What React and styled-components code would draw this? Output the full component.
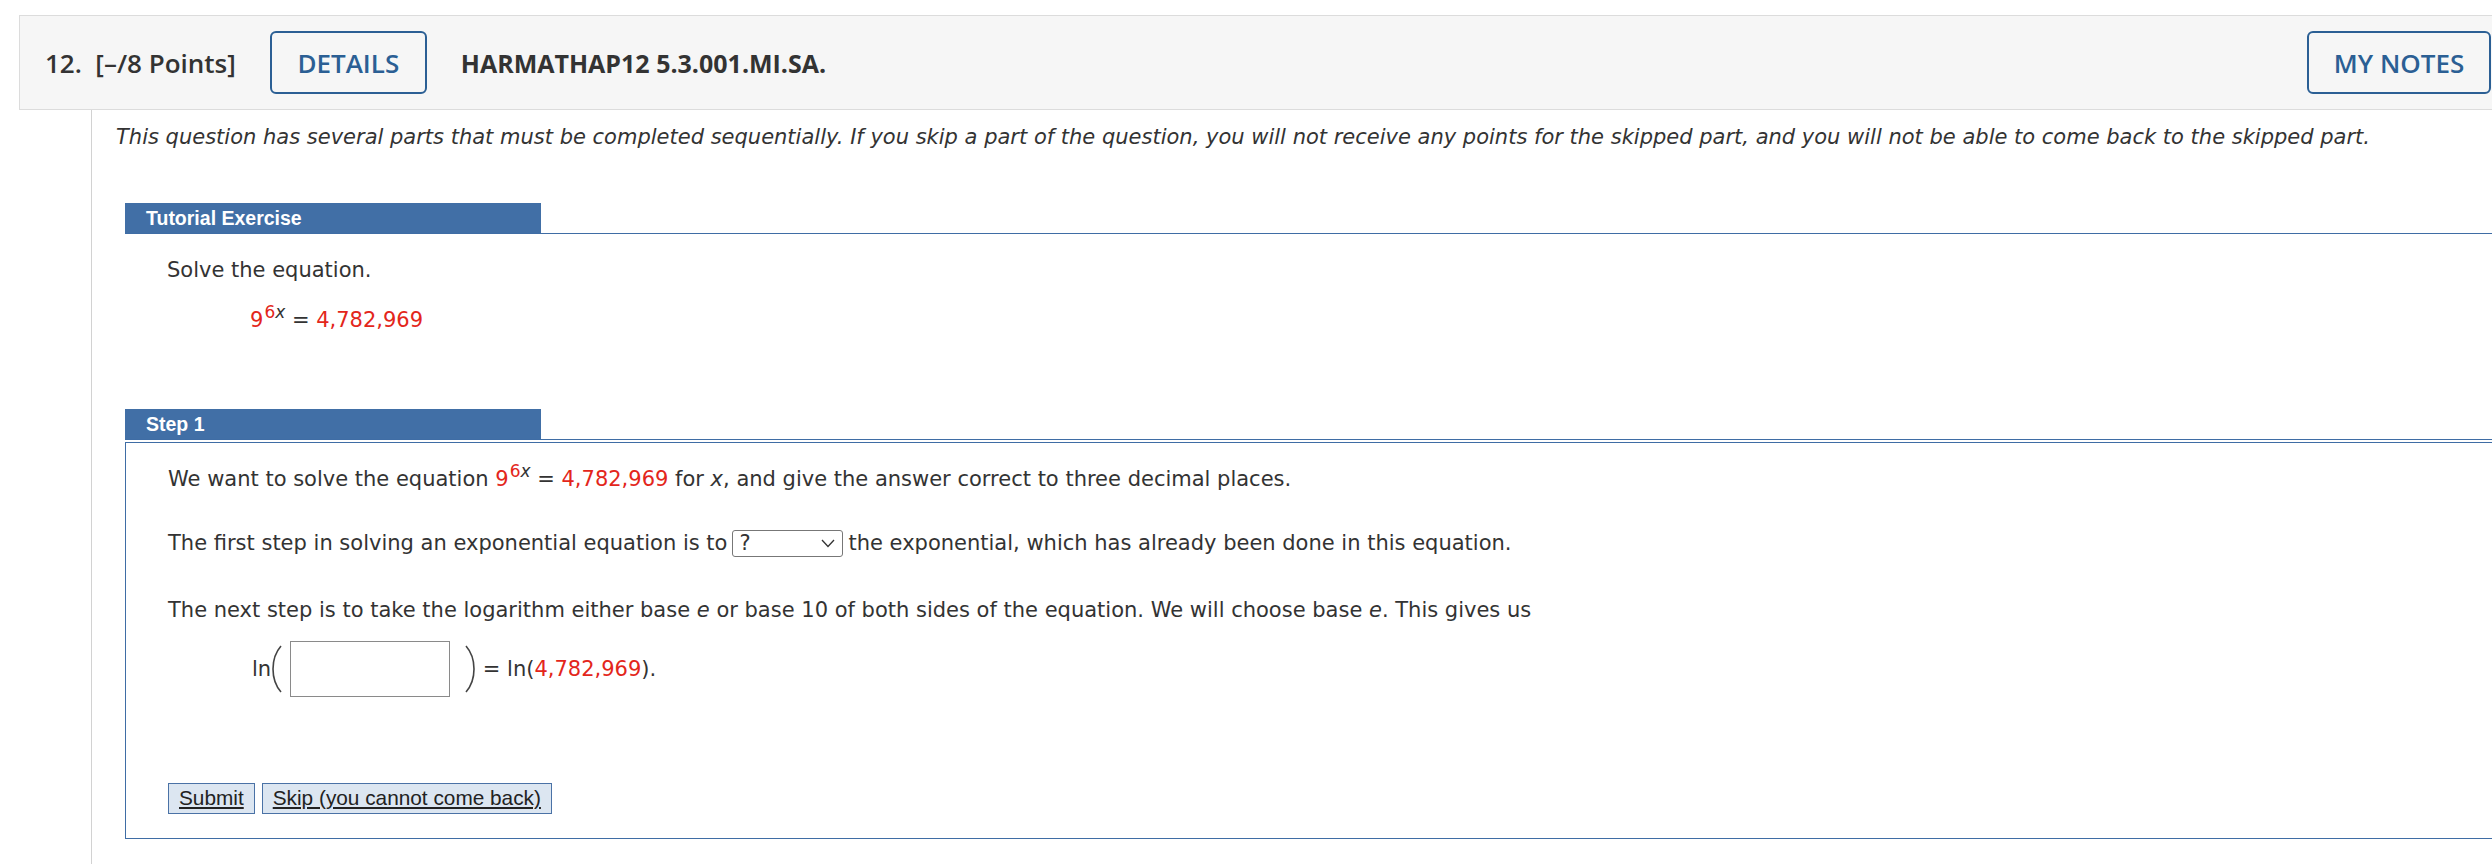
import React from 'react';
import styled, { createGlobalStyle } from 'styled-components';

const colors = {
  text: '#333333',
  red: '#e3261b',
  blue: '#3f6da5',
  tab: '#416fa6',
  notesBlue: '#2b5f94',
  headerBg: '#f6f6f6',
  headerLine: '#dcdcdc',
  rule: '#d2d2d2',
  buttonBg: '#dce6f1',
};

const bodyFont = `"DejaVu Sans", Verdana, sans-serif`;
const headFont = `"Open Sans", "Liberation Sans", sans-serif`;
const tabFont = `"Liberation Sans", Arial, sans-serif`;

const GlobalStyle = createGlobalStyle`
  html, body {
    margin: 0;
    height: 100%;
    overflow: hidden;
    background: #ffffff;
  }
  #root {
    height: 100%;
  }
`;

const Page = styled.div`
  display: flex;
  flex-direction: column;
  height: 100%;
  padding-top: 15px;
  box-sizing: border-box;
  color: ${colors.text};
`;

const Header = styled.header`
  display: flex;
  align-items: center;
  height: 95px;
  box-sizing: border-box;
  margin-left: 19px;
  margin-right: -20px;
  padding: 0 20px 0 25px;
  background: ${colors.headerBg};
  border: 1px solid ${colors.headerLine};
  font-family: ${headFont};
  font-weight: 600;
  font-size: 26px;
`;

const Label = styled.span`
  white-space: pre;
  margin-right: 34px;
`;

const Title = styled.span`
  font-size: 25px;
  font-weight: 700;
`;

const OutlineButton = styled.button`
  height: 63px;
  width: ${p => p.$width}px;
  margin-right: ${p => p.$gap || 0}px;
  margin-left: ${p => (p.$push ? 'auto' : '0')};
  border: 2px solid ${colors.notesBlue};
  border-radius: 6px;
  background: transparent;
  color: ${colors.notesBlue};
  font-family: ${headFont};
  font-weight: 600;
  font-size: 26px;
  padding: 0;
`;

const Content = styled.main`
  flex: 1;
  margin-left: 91px;
  border-left: 1px solid ${colors.rule};
  font-family: ${bodyFont};
  font-size: 21px;
`;

const Notice = styled.p`
  margin: 14px 0 0;
  padding-left: 24px;
  line-height: 26px;
  font-style: italic;
  white-space: nowrap;
`;

const Section = styled.section`
  margin: ${p => p.$top}px -20px 0 33px;
`;

const TabRow = styled.div`
  display: flex;
  border-bottom: 1px solid ${colors.blue};
`;

const Tab = styled.div`
  width: 416px;
  height: 30px;
  box-sizing: border-box;
  padding-left: 21px;
  background: ${colors.tab};
  color: #ffffff;
  font-family: ${tabFont};
  font-weight: 700;
  font-size: 19.5px;
  line-height: 31px;
`;

const Intro = styled.div`
  padding-left: 42px;
`;

const Line = styled.p`
  margin: ${p => p.$top || 0}px 0 0;
  line-height: 26px;
  white-space: nowrap;
`;

const Equation = styled.p`
  margin: 24px 0 0 83px;
  line-height: 26px;
`;

const Red = styled.span`
  color: ${colors.red};
`;

const Var = styled.i`
  font-style: italic;
`;

const Sup = styled.sup`
  font-size: 17px;
  line-height: 0;
  vertical-align: 9px;
  margin-left: 1px;
`;

const StepBox = styled.div`
  margin-top: 2px;
  padding: 23px 42px 24px;
  border: 1px solid ${colors.blue};
`;

const FakeSelect = styled.span`
  display: inline-flex;
  align-items: center;
  justify-content: space-between;
  width: 111px;
  height: 27px;
  box-sizing: border-box;
  margin: 0 5px 0 5px;
  padding: 0 7px 0 6px;
  border: 1px solid #777777;
  border-radius: 3px;
  vertical-align: middle;
  position: relative;
  top: -1px;
  line-height: 1;
`;

const LogRow = styled.div`
  display: flex;
  align-items: center;
  margin: 18px 0 0 84px;
  height: 56px;
`;

const AnswerInput = styled.input`
  width: 160px;
  height: 56px;
  box-sizing: border-box;
  margin: 0 14px 0 7px;
  border: 1px solid #8a8a8a;
  background: #ffffff;
`;

const Actions = styled.div`
  display: flex;
  gap: 7px;
  margin-top: 86px;
`;

const FormButton = styled.button`
  height: 31px;
  padding: 0 10px;
  border: 1px solid #4a72a6;
  background: ${colors.buttonBg};
  color: #222222;
  font-family: ${tabFont};
  font-size: 20.8px;
  text-decoration: underline;
`;

const Paren = ({ flip }) => (
  <svg width="12" height="48" viewBox="0 0 12 48" style={{ transform: flip ? 'scaleX(-1)' : 'none' }}>
    <path d="M10 1 C3 9 2 18 2 24 C2 30 3 39 10 47" fill="none" stroke="#444" strokeWidth="1.6" />
  </svg>
);

const Chevron = () => (
  <svg width="14" height="9" viewBox="0 0 14 9">
    <path d="M1 1 L7 7.5 L13 1" fill="none" stroke="#333" strokeWidth="1.3" />
  </svg>
);

export default function App() {
  return (
    <>
      <GlobalStyle />
      <Page>
        <Header>
          <Label>{'12.  [–/8 Points]'}</Label>
          <OutlineButton $width={157} $gap={34}>DETAILS</OutlineButton>
          <Title>HARMATHAP12 5.3.001.MI.SA.</Title>
          <OutlineButton $width={184} $push>MY NOTES</OutlineButton>
        </Header>

        <Content>
          <Notice>
            This question has several parts that must be completed sequentially. If you skip a part of the question, you will not receive any points for the skipped part, and you will not be able to come back to the skipped part.
          </Notice>

          <Section $top={53}>
            <TabRow><Tab>Tutorial Exercise</Tab></TabRow>
            <Intro>
              <Line $top={23}>Solve the equation.</Line>
              <Equation>
                <Red>9</Red><Sup><Red>6</Red><Var>x</Var></Sup> = <Red>4,782,969</Red>
              </Equation>
            </Intro>
          </Section>

          <Section $top={76}>
            <TabRow><Tab>Step 1</Tab></TabRow>
            <StepBox>
              <Line>
                We want to solve the equation <Red>9</Red><Sup><Red>6</Red><Var>x</Var></Sup> = <Red>4,782,969</Red> for <Var>x</Var>, and give the answer correct to three decimal places.
              </Line>
              <Line $top={38}>
                The first step in solving an exponential equation is to
                <FakeSelect>? <Chevron /></FakeSelect>
                the exponential, which has already been done in this equation.
              </Line>
              <Line $top={39}>
                The next step is to take the logarithm either base <Var>e</Var> or base 10 of both sides of the equation. We will choose base <Var>e</Var>. This gives us
              </Line>
              <LogRow>
                <span>ln</span>
                <Paren />
                <AnswerInput type="text" aria-label="answer" />
                <Paren flip />
                <span>&nbsp;= ln(<Red>4,782,969</Red>).</span>
              </LogRow>
              <Actions>
                <FormButton>Submit</FormButton>
                <FormButton>Skip (you cannot come back)</FormButton>
              </Actions>
            </StepBox>
          </Section>
        </Content>
      </Page>
    </>
  );
}
